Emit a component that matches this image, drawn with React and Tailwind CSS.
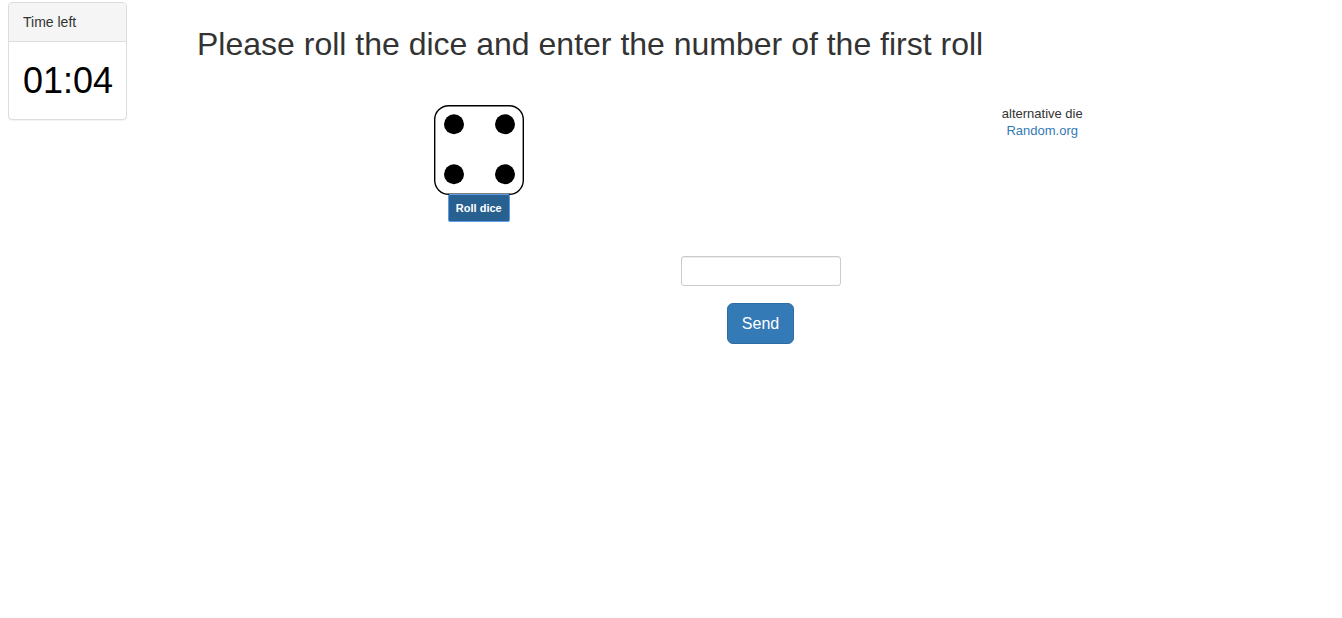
import { useState } from 'react';

const PIPS = {
  1: [[45, 45]],
  2: [[20, 19], [71, 69]],
  3: [[20, 19], [45, 45], [71, 69]],
  4: [[20, 19], [71, 19], [20, 69], [71, 69]],
  5: [[20, 19], [71, 19], [45, 45], [20, 69], [71, 69]],
  6: [[20, 19], [71, 19], [20, 44], [71, 44], [20, 69], [71, 69]],
};

function Die({ value }) {
  return (
    <svg className="block h-[90px] w-[90px]" viewBox="0 0 90 90" role="img" aria-label={`Die showing ${value}`}>
      <rect x="0.7" y="0.7" width="88.6" height="88.6" rx="14" fill="#fff" stroke="#000" strokeWidth="1.4" />
      {PIPS[value].map(([x, y]) => (
        <circle key={`${x}-${y}`} cx={x} cy={y + 0.3} r="10" fill="#000" />
      ))}
    </svg>
  );
}

function Timer() {
  return (
    <section className="w-[119px] shrink-0 self-start rounded border border-[#ddd] bg-white shadow-[0_1px_1px_rgba(0,0,0,0.05)]">
      <h2 className="rounded-t border-b border-[#ddd] bg-[#f5f5f5] px-3.5 py-[9px] text-sm leading-5">Time left</h2>
      <p className="whitespace-nowrap px-3.5 pt-[19px] pb-[18px] text-4xl leading-[40px] text-black">01:04</p>
    </section>
  );
}

export default function App() {
  const [value, setValue] = useState(4);

  return (
    <div className="flex gap-[70px] bg-white pt-0.5 pr-[18px] pl-2 font-['Liberation_Sans',Arial,sans-serif] text-[#333]">
      <Timer />
      <main className="min-w-0 flex-1 pt-6">
        <h1 className="text-[32px] leading-9">Please roll the dice and enter the number of the first roll</h1>

        <div className="mt-[43px] grid grid-cols-2">
          <div className="flex flex-col items-center">
            <Die value={value} />
            <button
              type="button"
              onClick={() => setValue(1 + Math.floor(Math.random() * 6))}
              className="-mt-px rounded-xs border border-[#5b9bea] bg-[#286090] px-[7px] py-[5px] text-[11px] leading-4 font-bold text-white"
            >
              Roll dice
            </button>
          </div>
          <p className="text-center text-[13px] leading-[17px]">
            alternative die
            <br />
            <a href="#random" className="text-[#337ab7]">Random.org</a>
          </p>
        </div>

        <form className="mt-[34px] flex flex-col items-center gap-[17px]" onSubmit={(e) => e.preventDefault()}>
          <input
            type="text"
            aria-label="First roll"
            className="h-[30px] w-40 rounded-[3px] border border-[#ccc] bg-white px-2.5 text-xs shadow-[inset_0_1px_1px_rgba(0,0,0,0.075)]"
          />
          <button type="submit" className="rounded-md border border-[#2e6da4] bg-[#337ab7] px-3.5 py-2 text-base leading-[23px] text-white">
            Send
          </button>
        </form>
      </main>
    </div>
  );
}
